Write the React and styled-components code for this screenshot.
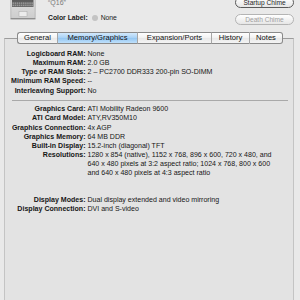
import React from "react";
import styled, { createGlobalStyle } from "styled-components";

const Global = createGlobalStyle`
  html, body { margin: 0; padding: 0; }
  body {
    background: #e9e9e9;
    font-family: "Liberation Sans", Arial, sans-serif;
    overflow: hidden;
    width: 300px;
    height: 300px;
  }
`;

const Page = styled.div`
  width: 300px;
  height: 300px;
  overflow: hidden;
`;

const Header = styled.div`
  display: flex;
  margin-top: -8px;
  height: 33px;
`;

const IconBox = styled.div`
  margin-left: 10px;
  width: 26px;
  height: 28px;
  svg { display: block; }
`;

const Info = styled.div`
  margin-left: 12px;
  padding-top: 6px;
  display: flex;
  flex-direction: column;
  gap: 5px;
`;

const Name = styled.div`
  font-size: 7px;
  line-height: 10px;
  color: #7a7a7a;
`;

const ColorRow = styled.div`
  display: flex;
  align-items: center;
  font-size: 6.8px;
  line-height: 10px;
  color: #1a1a1a;
`;

const BoldText = styled.span`
  font-weight: bold;
`;

const Dot = styled.span`
  width: 6px;
  height: 6px;
  border-radius: 50%;
  background: #c4c4c4;
  margin: 0 3px 0 4px;
`;

const Buttons = styled.div`
  margin-left: auto;
  margin-right: 6px;
  padding-top: 5px;
  display: flex;
  flex-direction: column;
  gap: 6px;
  width: 59px;
`;

const Pill = styled.div`
  height: 11px;
  box-sizing: border-box;
  border-radius: 6px;
  border: 1px solid ${(p) => (p.$disabled ? "#b4b4b4" : "#5a5a5a")};
  background: linear-gradient(#ffffff, #e6e6e6);
  color: ${(p) => (p.$disabled ? "#a0a0a0" : "#1e1e1e")};
  font-size: 6.6px;
  line-height: 9px;
  text-align: center;
  white-space: nowrap;
`;

const Panel = styled.div`
  margin-top: 13px;
  margin-left: 4px;
  width: 290px;
  box-sizing: border-box;
  height: 300px;
  border: 1px solid #c4c4c4;
  border-top-color: #9c9c9c;
  background: #e3e3e3;
`;

const TabRow = styled.div`
  display: flex;
  margin-top: -7px;
  padding-left: 12px;
`;

const Tab = styled.div`
  width: ${(p) => p.$w}px;
  height: 12px;
  box-sizing: border-box;
  border-top: 1px solid #8a8a8a;
  border-bottom: 1px solid #8a8a8a;
  border-left: 1px solid ${(p) => (p.$first ? "#8a8a8a" : "#a6a6a6")};
  border-right: ${(p) => (p.$last ? "1px solid #8a8a8a" : "none")};
  border-radius: ${(p) => (p.$first ? "3px 0 0 3px" : p.$last ? "0 3px 3px 0" : "0")};
  background: ${(p) =>
    p.$active
      ? "linear-gradient(#d3e9fc, #a6d0f5 50%, #93c6f2 51%, #bfe0fb)"
      : "linear-gradient(#ffffff, #f1f1f1 50%, #e8e8e8 51%, #f4f4f4)"};
  font-size: 7.6px;
  line-height: 10px;
  text-align: center;
  color: #111;
  white-space: nowrap;
`;

const Content = styled.div`
  margin-top: 5px;
`;

const Group = styled.div`
  display: flex;
  flex-direction: column;
  margin-top: ${(p) => p.$top || 0}px;
`;

const Row = styled.div`
  display: grid;
  grid-template-columns: 80.5px 1fr;
  column-gap: 2px;
  font-size: 7.05px;
  line-height: 9.15px;
  color: #161616;
`;

const Label = styled.div`
  font-weight: bold;
  text-align: right;
  white-space: nowrap;
`;

const Value = styled.div`
  white-space: nowrap;
`;

const Separator = styled.div`
  height: 1px;
  background: #a9a9a9;
  margin: 5px 5px 3.5px 7px;
`;

function Laptop() {
  return (
    <svg width="26" height="28" viewBox="0 0 26 28">
      <defs>
        <linearGradient id="lb" x1="0" y1="0" x2="0" y2="1">
          <stop offset="0" stopColor="#e6e6e6" />
          <stop offset="1" stopColor="#cdcdcd" />
        </linearGradient>
        <linearGradient id="kb" x1="0" y1="0" x2="0" y2="1">
          <stop offset="0" stopColor="#4a4a4a" />
          <stop offset="1" stopColor="#6a6a6a" />
        </linearGradient>
      </defs>
      <rect x="0.8" y="0" width="24.4" height="26.6" rx="1.2" fill="url(#lb)" stroke="#a2a2a2" strokeWidth="0.6" />
      <rect x="2" y="0" width="21.5" height="15" fill="url(#kb)" />
      {[10.4, 12.6].map((y) =>
        Array.from({ length: 10 }).map((_, i) => (
          <rect key={`${y}-${i}`} x={2.5 + i * 2.1} y={y} width="1.5" height="1.5" fill="#9a9a9a" />
        ))
      )}
      <rect x="9" y="19.5" width="8" height="5" fill="#ececec" stroke="#a8a8a8" strokeWidth="0.5" />
      <rect x="0.5" y="26" width="25" height="1.4" fill="#8f8f8f" />
    </svg>
  );
}

const tabs = [
  { t: "General", w: 40 },
  { t: "Memory/Graphics", w: 80, active: true },
  { t: "Expansion/Ports", w: 74 },
  { t: "History", w: 38 },
  { t: "Notes", w: 34 },
];

const memory = [
  ["Logicboard RAM:", ["None"]],
  ["Maximum RAM:", ["2.0 GB"]],
  ["Type of RAM Slots:", ["2 \u2013 PC2700 DDR333 200-pin SO-DIMM"]],
  ["Minimum RAM Speed:", ["--"]],
  ["Interleaving Support:", ["No"]],
];

const graphics = [
  ["Graphics Card:", ["ATI Mobility Radeon 9600"]],
  ["ATI Card Model:", ["ATY,RV350M10"]],
  ["Graphics Connection:", ["4x AGP"]],
  ["Graphics Memory:", ["64 MB DDR"]],
  ["Built-in Display:", ["15.2-inch (diagonal) TFT"]],
  [
    "Resolutions:",
    [
      "1280 x 854 (native), 1152 x 768, 896 x 600, 720 x 480, and",
      "640 x 480 pixels at 3:2 aspect ratio; 1024 x 768, 800 x 600",
      "and 640 x 480 pixels at 4:3 aspect ratio",
    ],
  ],
];

const display = [
  ["Display Modes:", ["Dual display extended and video mirroring"]],
  ["Display Connection:", ["DVI and S-video"]],
];

function Rows({ data }) {
  return data.map(([label, lines]) => (
    <Row key={label}>
      <Label>{label}</Label>
      <Value>
        {lines.map((l) => (
          <div key={l}>{l}</div>
        ))}
      </Value>
    </Row>
  ));
}

export default function App() {
  return (
    <Page>
      <Global />
      <Header>
        <IconBox>
          <Laptop />
        </IconBox>
        <Info>
          <Name>{"\u201CQ16\u201D"}</Name>
          <ColorRow>
            <BoldText>Color Label:</BoldText>
            <Dot />
            <span>None</span>
          </ColorRow>
        </Info>
        <Buttons>
          <Pill>Startup Chime</Pill>
          <Pill $disabled>Death Chime</Pill>
        </Buttons>
      </Header>
      <Panel>
        <TabRow>
          {tabs.map((t, i) => (
            <Tab key={t.t} $w={t.w} $active={t.active} $first={i === 0} $last={i === tabs.length - 1}>
              {t.t}
            </Tab>
          ))}
        </TabRow>
        <Content>
          <Group>
            <Rows data={memory} />
          </Group>
          <Separator />
          <Group>
            <Rows data={graphics} />
          </Group>
          <Group $top={17}>
            <Rows data={display} />
          </Group>
        </Content>
      </Panel>
    </Page>
  );
}
